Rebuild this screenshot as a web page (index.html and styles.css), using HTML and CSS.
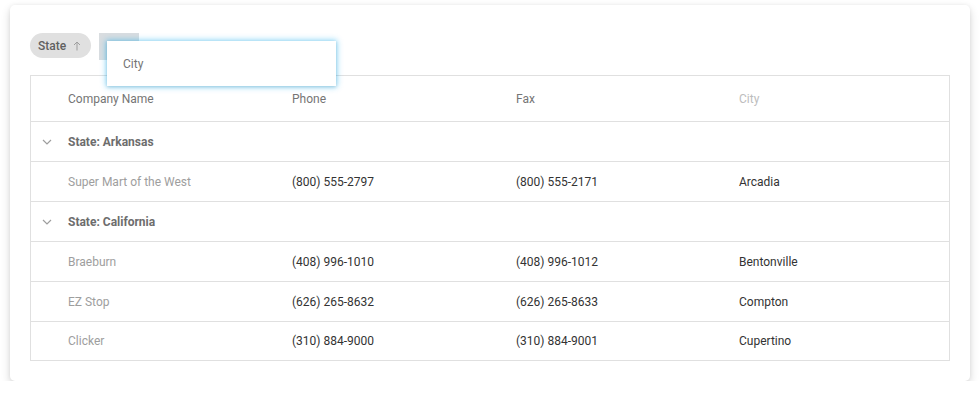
FILE: index.html
```html
<!DOCTYPE html>
<html lang="en">
<head>
<meta charset="UTF-8">
<title>Grouping</title>
<link rel="stylesheet" href="styles.css">
</head>
<body>
<div class="card">
    <div class="group-panel">
        <div class="chip">
            <span>State</span>
            <svg width="8" height="10" viewBox="0 0 8 10"><path d="M4 9.5V1M1 4L4 1L7 4" fill="none" stroke="#9e9e9e" stroke-width="1"/></svg>
        </div>
        <div class="placeholder"></div>
    </div>

    <div class="grid">
        <div class="row header">
            <div class="cell"></div>
            <div class="cell">Company Name</div>
            <div class="cell">Phone</div>
            <div class="cell">Fax</div>
            <div class="cell faded">City</div>
        </div>
        <div class="row group">
            <div class="cell expand"><svg width="10" height="6" viewBox="0 0 10 6"><path d="M1 1L5 5L9 1" fill="none" stroke="#9e9e9e" stroke-width="1.2"/></svg></div>
            <div class="cell">State: Arkansas</div>
        </div>
        <div class="row">
            <div class="cell"></div>
            <div class="cell muted">Super Mart of the West</div>
            <div class="cell">(800) 555-2797</div>
            <div class="cell">(800) 555-2171</div>
            <div class="cell">Arcadia</div>
        </div>
        <div class="row group">
            <div class="cell expand"><svg width="10" height="6" viewBox="0 0 10 6"><path d="M1 1L5 5L9 1" fill="none" stroke="#9e9e9e" stroke-width="1.2"/></svg></div>
            <div class="cell">State: California</div>
        </div>
        <div class="row">
            <div class="cell"></div>
            <div class="cell muted">Braeburn</div>
            <div class="cell">(408) 996-1010</div>
            <div class="cell">(408) 996-1012</div>
            <div class="cell">Bentonville</div>
        </div>
        <div class="row">
            <div class="cell"></div>
            <div class="cell muted">EZ Stop</div>
            <div class="cell">(626) 265-8632</div>
            <div class="cell">(626) 265-8633</div>
            <div class="cell">Compton</div>
        </div>
        <div class="row last">
            <div class="cell"></div>
            <div class="cell muted">Clicker</div>
            <div class="cell">(310) 884-9000</div>
            <div class="cell">(310) 884-9001</div>
            <div class="cell">Cupertino</div>
        </div>
    </div>

    <div class="drag-header">City</div>
</div>
</body>
</html>
```

FILE: styles.css
```css
body {
    margin: 0;
    background: #fff;
    font-family: Roboto, "Noto Sans", sans-serif;
    font-size: 12px;
    color: #333;
}
.card {
    position: relative;
    margin: 5px 10px 0 10px;
    width: 920px;
    padding: 28px 20px 20px 20px;
    background: #fff;
    border-radius: 5px;
    box-shadow: 0 4px 10px rgba(0, 0, 0, 0.16), 0 0 4px rgba(0, 0, 0, 0.06);
}
.group-panel {
    display: flex;
    align-items: center;
    gap: 8px;
    height: 25px;
    margin-bottom: 17px;
}
.chip {
    display: flex;
    align-items: center;
    gap: 7px;
    height: 25px;
    padding: 0 10px 0 8px;
    background: #e0e0e0;
    border-radius: 13px;
    color: #616161;
    font-weight: 500;
}
.placeholder {
    width: 40px;
    height: 27px;
    align-self: flex-start;
    background: #d9dde0;
}
.grid {
    border: 1px solid #e0e0e0;
}
.row {
    display: grid;
    grid-template-columns: 25px 224px 224px 223px 1fr;
    height: 39px;
    border-bottom: 1px solid #e0e0e0;
    align-items: center;
}
.row.last {
    height: 38px;
    border-bottom: none;
}
.row.header {
    height: 45px;
    color: #757575;
}
.row.group {
    grid-template-columns: 25px 1fr;
    color: #6d6d6d;
    font-weight: 700;
}
.cell {
    padding: 0 12px;
    white-space: nowrap;
}
.cell.expand {
    padding: 0 0 0 11px;
    display: flex;
    align-items: center;
}
.faded {
    color: #bdbdbd;
}
.muted {
    color: #9e9e9e;
}
.drag-header {
    position: absolute;
    left: 97px;
    top: 36px;
    width: 213px;
    height: 45px;
    padding-left: 16px;
    line-height: 47px;
    background: #fff;
    color: #757575;
    box-shadow: 0 0 6px 1px rgba(3, 169, 244, 0.45), 0 1px 3px rgba(0, 0, 0, 0.15);
}
```
